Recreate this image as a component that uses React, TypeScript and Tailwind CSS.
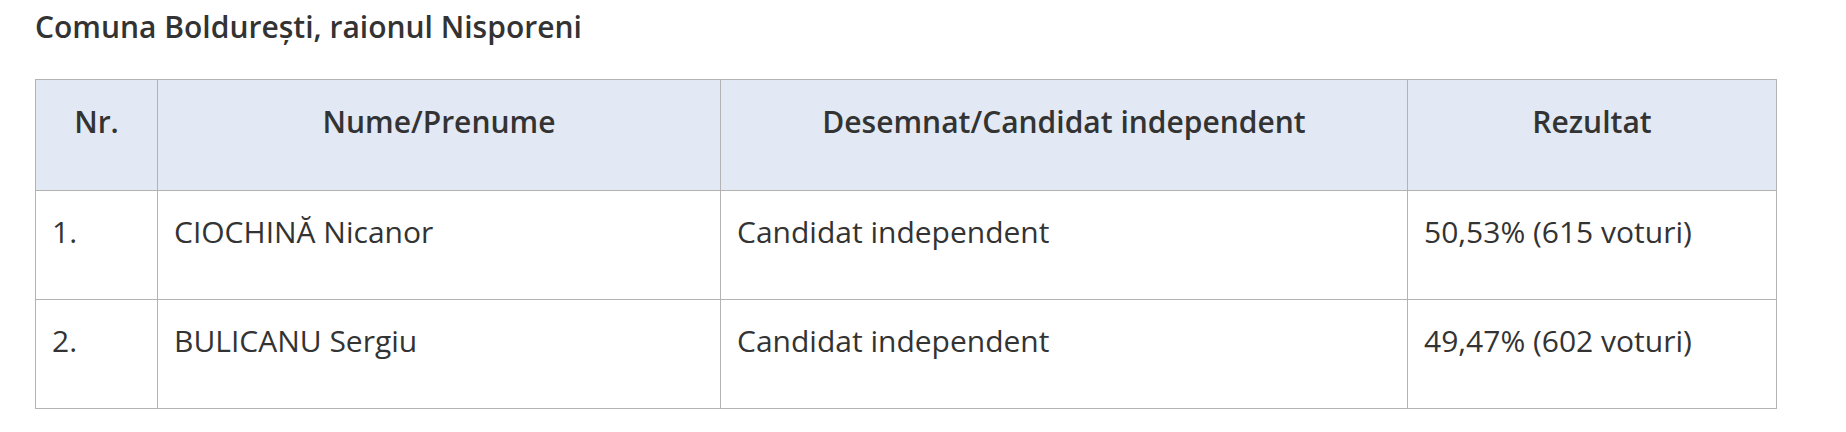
import React from "react";

const rows = [
  { nr: "1.", name: "CIOCHINĂ Nicanor", des: "Candidat independent", rez: "50,53% (615 voturi)" },
  { nr: "2.", name: "BULICANU Sergiu", des: "Candidat independent", rez: "49,47% (602 voturi)" },
];

export default function App() {
  return (
    <div
      className="w-[1846px] h-[432px] bg-white text-[#333333] pl-[35px] pt-[4px] overflow-hidden"
      style={{ fontFamily: "'Open Sans', 'Noto Sans', sans-serif" }}
    >
      <h2 className="text-[30px] leading-[45px] font-semibold">Comuna Boldurești, raionul Nisporeni</h2>
      <table className="mt-[30px] w-[1741px] table-fixed border-collapse border border-[#b3b3b3] text-[30px] leading-[45px]">
        <colgroup>
          <col className="w-[122px]" />
          <col className="w-[563px]" />
          <col className="w-[687px]" />
          <col className="w-[369px]" />
        </colgroup>
        <thead>
          <tr className="bg-[#e2e9f4]">
            <th className="border border-[#b3b3b3] px-4 pt-[19px] pb-[46px] text-center font-semibold">Nr.</th>
            <th className="border border-[#b3b3b3] px-4 pt-[19px] pb-[46px] text-center font-semibold">Nume/Prenume</th>
            <th className="border border-[#b3b3b3] px-4 pt-[19px] pb-[46px] text-center font-semibold">Desemnat/Candidat independent</th>
            <th className="border border-[#b3b3b3] px-4 pt-[19px] pb-[46px] text-center font-semibold">Rezultat</th>
          </tr>
        </thead>
        <tbody>
          {rows.map((r) => (
            <tr key={r.nr}>
              <td className="border border-[#b3b3b3] px-4 pt-[18px] pb-[45px] align-top">{r.nr}</td>
              <td className="border border-[#b3b3b3] px-4 pt-[18px] pb-[45px] align-top">{r.name}</td>
              <td className="border border-[#b3b3b3] px-4 pt-[18px] pb-[45px] align-top">{r.des}</td>
              <td className="border border-[#b3b3b3] px-4 pt-[18px] pb-[45px] align-top">{r.rez}</td>
            </tr>
          ))}
        </tbody>
      </table>
    </div>
  );
}
